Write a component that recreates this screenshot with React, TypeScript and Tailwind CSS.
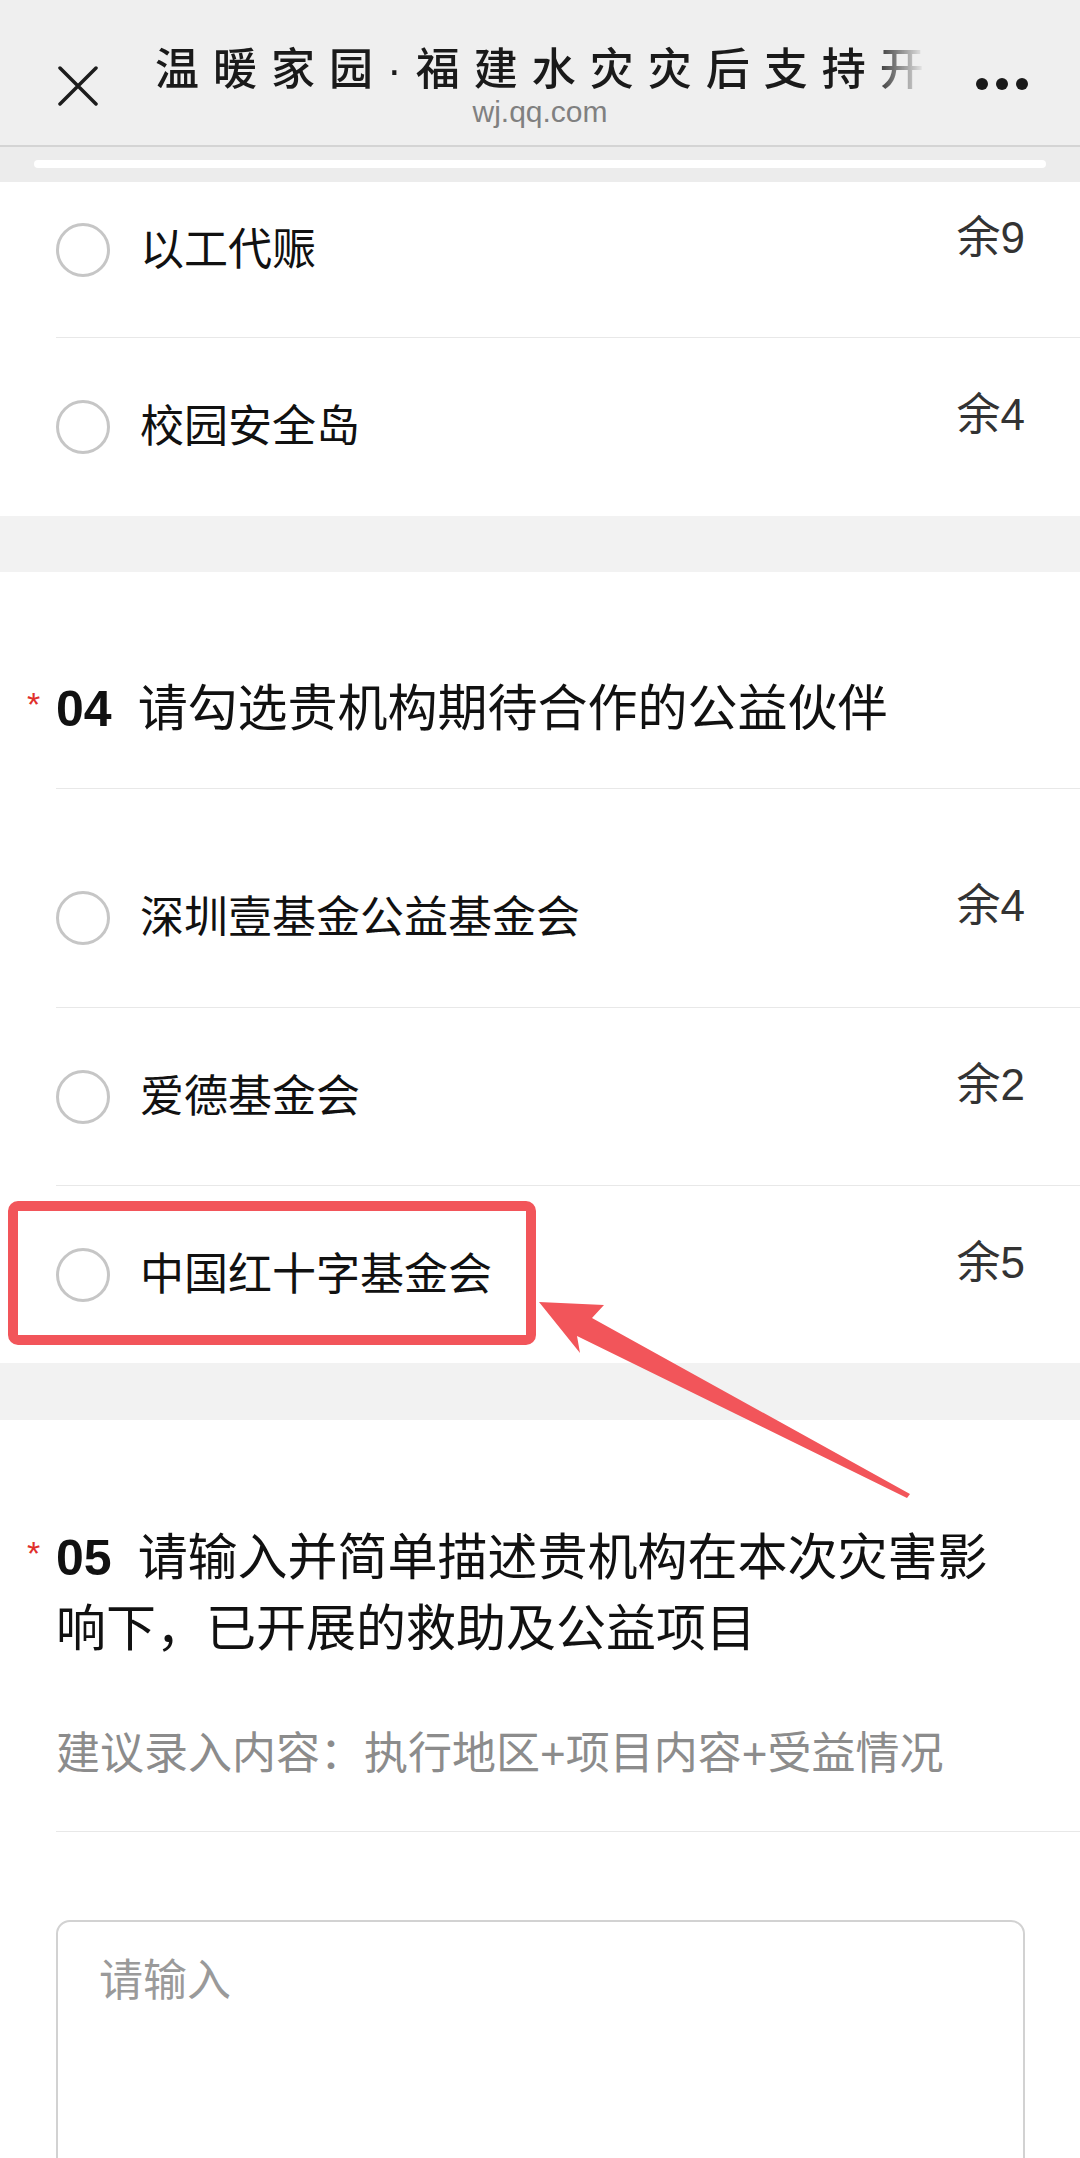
import clsx from "clsx";

const cjk = "font-['Liberation_Sans','Noto_Sans_CJK_SC',sans-serif]";

interface OptionProps {
	label: string;
	left: number;
	divider?: boolean;
	className?: string;
}

const OptionRow = ({label, left, divider, className}: OptionProps) => (
	<div className={clsx("flex items-center pr-[55px]", divider && "border-t border-[#e8e8e8]", className)}>
		<span className="h-[54px] w-[54px] shrink-0 rounded-full border-[3px] border-[#c6c6c6]" />
		<span className="ml-[30px] text-[44px] leading-[60px] text-[#111]">{label}</span>
		<span className="mb-[24px] ml-auto text-[44px] leading-[60px] text-[#333]">余{left}</span>
	</div>
);

const Question = ({num, children}: {num: string; children: React.ReactNode}) => (
	<h2 className="pr-[70px] text-[50px] font-normal leading-[71px] text-[#111]">
		<span className="-ml-[29px] inline-block w-[29px] align-top text-[34px] leading-[60px] text-[#e0302c]">*</span>
		<span className="mr-[26px] font-bold">{num}</span>
		{children}
	</h2>
);

export default function App() {
	return (
		<div className={clsx("relative h-[2158px] w-[1080px] overflow-hidden bg-white", cjk)}>
			{/* browser bar */}
			<div className="flex h-[147px] items-start border-b-2 border-[#d4d4d4] bg-[#efefef]">
				<svg className="ml-[58px] mt-[66px] shrink-0" width="40" height="40" viewBox="0 0 40 40">
					<path d="M2 2 L38 38 M38 2 L2 38" stroke="#1c1c1c" strokeWidth="3.5" strokeLinecap="round" />
				</svg>
				<div className="ml-[57px] flex w-[770px] flex-col items-center pt-[45px]">
					<div className="w-full overflow-hidden whitespace-nowrap text-[44px] font-medium leading-[50px] tracking-[14px] text-[#1a1a1a] [mask-image:linear-gradient(to_right,black_93%,transparent_100%)]">
						温暖家园·福建水灾灾后支持开展
					</div>
					<div className="text-[30px] leading-[34px] text-[#808080]">wj.qq.com</div>
				</div>
				<div className="ml-auto mr-[52px] mt-[78px] flex gap-[8px]">
					<span className="h-[12px] w-[12px] rounded-full bg-[#1a1a1a]" />
					<span className="h-[12px] w-[12px] rounded-full bg-[#1a1a1a]" />
					<span className="h-[12px] w-[12px] rounded-full bg-[#1a1a1a]" />
				</div>
			</div>
			<div className="h-[35px] bg-[#ececec] px-[34px] pt-[13px]">
				<div className="h-[8px] rounded-full bg-white" />
			</div>

			{/* question 03 (tail) */}
			<div className="pl-[56px]">
				<OptionRow label="以工代赈" left={9} className="h-[155px] pb-[19px]" />
				<OptionRow label="校园安全岛" left={4} divider className="h-[179px]" />
			</div>
			<div className="h-[56px] bg-[#f2f2f2]" />

			{/* question 04 */}
			<div className="pl-[56px]">
				<div className="border-b border-[#e8e8e8] pb-[43px] pt-[102px]">
					<Question num="04">请勾选贵机构期待合作的公益伙伴</Question>
				</div>
				<div className="pt-[40px]">
					<OptionRow label="深圳壹基金公益基金会" left={4} className="h-[178px]" />
					<OptionRow label="爱德基金会" left={2} divider className="h-[178px]" />
					<OptionRow label="中国红十字基金会" left={5} divider className="h-[178px]" />
				</div>
			</div>
			<div className="h-[57px] bg-[#f2f2f2]" />

			{/* question 05 */}
			<div className="pl-[56px]">
				<div className="border-b border-[#e8e8e8] pb-[47px] pt-[103px]">
					<Question num="05">请输入并简单描述贵机构在本次灾害影响下，已开展的救助及公益项目</Question>
					<p className="mt-[59px] text-[44px] leading-[60px] text-[#8c8c8c]">建议录入内容：执行地区+项目内容+受益情况</p>
				</div>
				<div className="mr-[55px] mt-[88px] h-[400px] rounded-[14px] border-2 border-[#d2d2d2] pl-[41px] pt-[29px] text-[44px] leading-[60px] text-[#9a9a9a]">
					请输入
				</div>
			</div>

			{/* annotation */}
			<svg className="pointer-events-none absolute left-0 top-0" width="1080" height="2158" viewBox="0 0 1080 2158">
				<rect x="13" y="1206" width="518" height="134" rx="5" fill="none" stroke="#f2555a" strokeWidth="10" />
				<polygon
					points="539,1302 604,1305 592,1318 910,1494 907,1498 577,1336 580,1353"
					fill="#f2555a"
				/>
			</svg>
		</div>
	);
}
